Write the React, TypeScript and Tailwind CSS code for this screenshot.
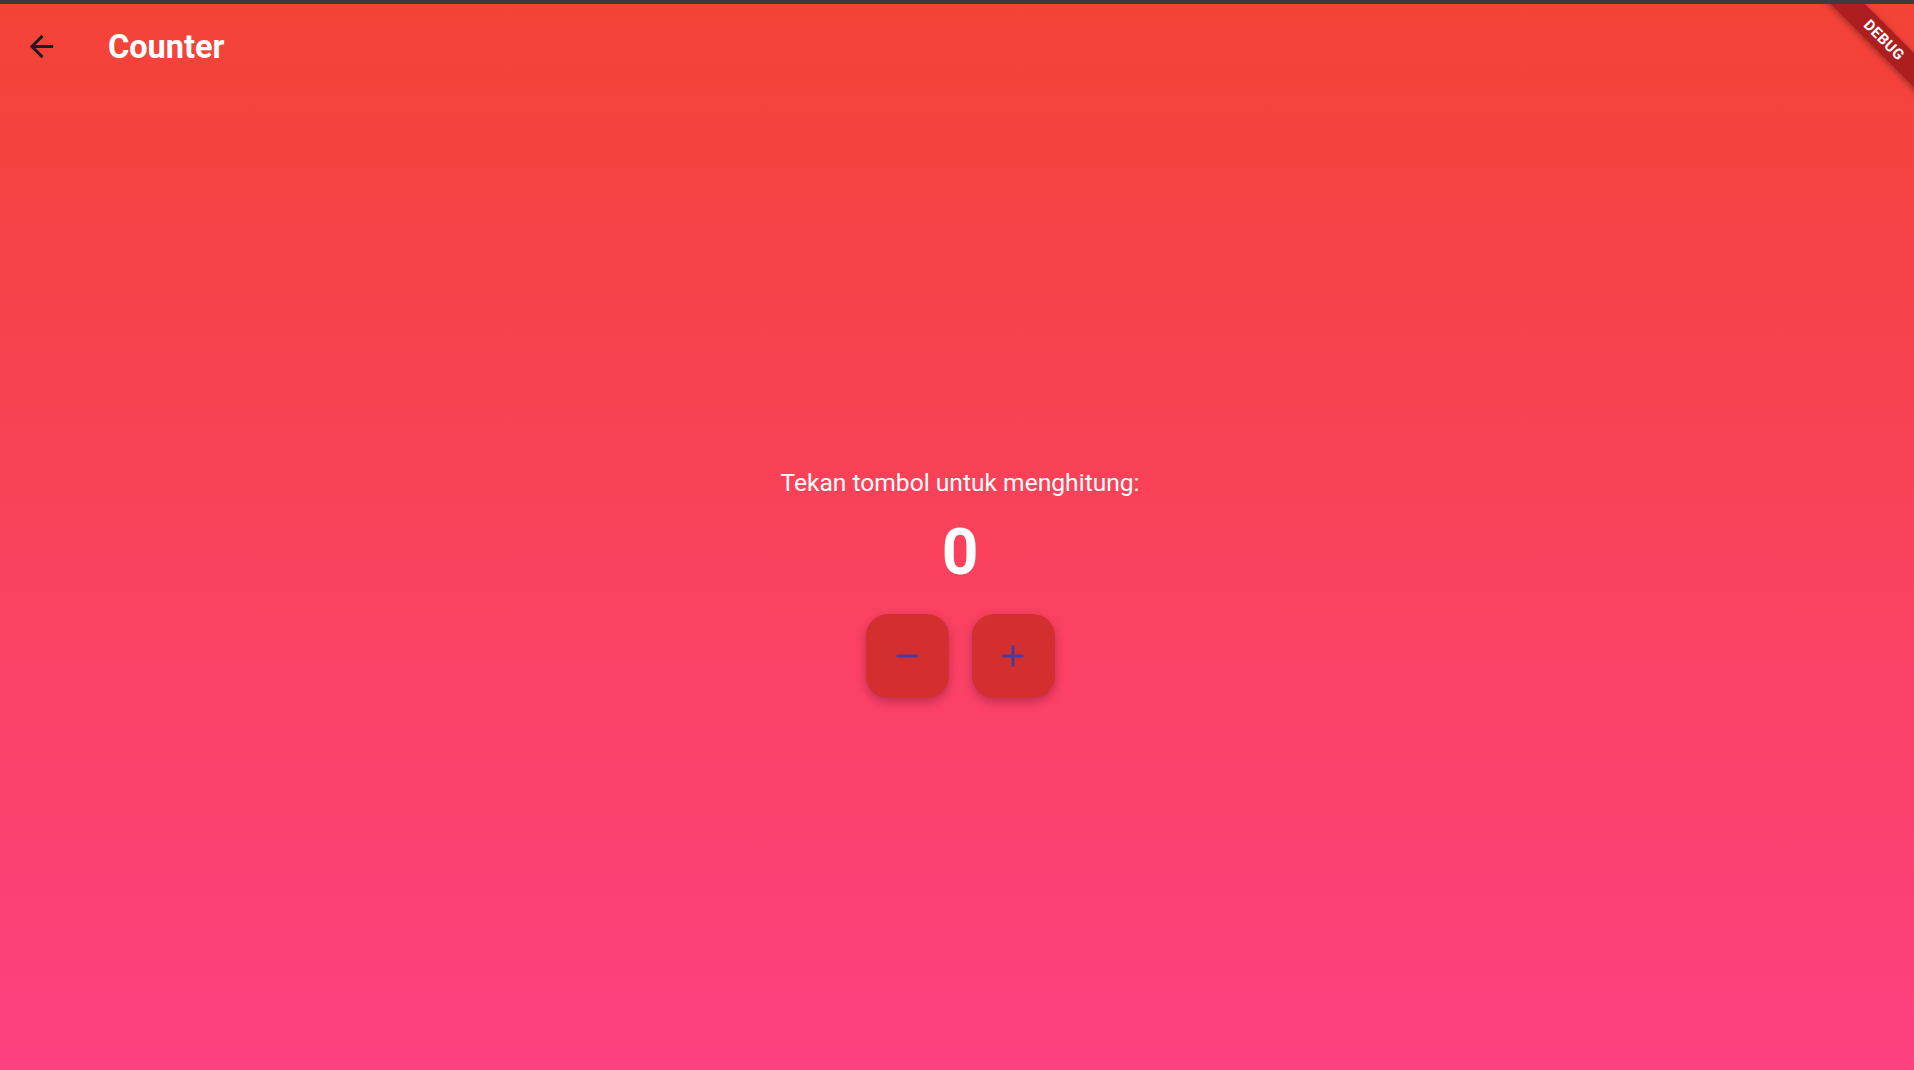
import { useState } from "react";

const ArrowBack = () => (
  <svg viewBox="0 0 24 24" className="h-[35px] w-[35px] fill-[#1d1b20]">
    <path d="M20 11H7.83l5.59-5.59L12 4l-8 8 8 8 1.41-1.41L7.83 13H20v-2z" />
  </svg>
);

const MinusIcon = () => (
  <svg viewBox="0 0 24 24" className="h-[36px] w-[36px] fill-[#483ca0]">
    <path d="M19 13H5v-2h14v2z" />
  </svg>
);

const PlusIcon = () => (
  <svg viewBox="0 0 24 24" className="h-[36px] w-[36px] fill-[#483ca0]">
    <path d="M19 13h-6v6h-2v-6H5v-2h6V5h2v6h6v2z" />
  </svg>
);

const Counter = () => {
  const [count, setCount] = useState(0);

  return (
    <div className="relative flex h-screen w-full flex-col overflow-hidden bg-linear-to-b/srgb from-[#f44336] to-[#ff4081] font-['Roboto',sans-serif]">
      {/* window strip */}
      <div className="relative z-20 h-[4px] w-full shrink-0 bg-[#3c3c3c]" />

      {/* app bar */}
      <div className="flex h-[85px] shrink-0 items-center pl-[24px]">
        <button className="flex items-center justify-center">
          <ArrowBack />
        </button>
        <h1 className="ml-[49px] text-[32.5px] font-bold leading-[38px] text-white">Counter</h1>
      </div>

      {/* body */}
      <div className="flex flex-1 flex-col items-center justify-center pl-[6px] pt-[6px]">
        <p className="text-[24.6px] leading-[30px] text-white">Tekan tombol untuk menghitung:</p>
        <div className="mt-[17px] text-[64px] font-bold leading-[75px] text-white">{count}</div>
        <div className="mt-[24px] flex gap-[23px]">
          <button
            onClick={() => setCount((c) => c - 1)}
            className="flex h-[84px] w-[83px] items-center justify-center rounded-[22px] bg-[#d32f2f] shadow-[0_4px_10px_rgba(70,0,40,0.3)]"
          >
            <MinusIcon />
          </button>
          <button
            onClick={() => setCount((c) => c + 1)}
            className="flex h-[84px] w-[83px] items-center justify-center rounded-[22px] bg-[#d32f2f] shadow-[0_4px_10px_rgba(70,0,40,0.3)]"
          >
            <PlusIcon />
          </button>
        </div>
      </div>

      {/* debug banner */}
      <div className="absolute left-[1804px] top-[28px] z-10 flex h-[24px] w-[160px] rotate-45 items-center justify-center bg-[#ad1f1f] shadow-[0_2px_6px_rgba(0,0,0,0.35)]">
        <span className="text-[15px] font-bold leading-none tracking-[0.5px] text-white">DEBUG</span>
      </div>
    </div>
  );
};

export default function App() {
  return <Counter />;
}
